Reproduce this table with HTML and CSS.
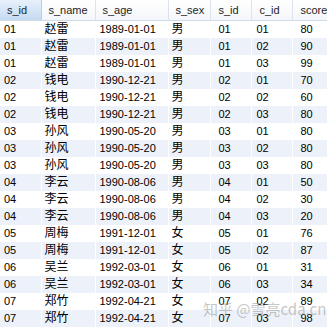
FILE: index.html
```html
<!DOCTYPE html>
<html>
<head>
<meta charset="utf-8">
<link rel="stylesheet" href="styles.css">
</head>
<body>
<div class="grid">
<table class="tbl">
<colgroup>
<col class="c1"><col class="c2"><col class="c3"><col class="c4"><col class="c5"><col class="c6"><col class="c7">
</colgroup>
<thead>
<tr><th class="sel">s_id</th><th>s_name</th><th>s_age</th><th>s_sex</th><th class="p2">s_id</th><th class="p2">c_id</th><th class="p2">score</th></tr>
</thead>
<tbody>
<tr><td>01</td><td class="cn">赵雷</td><td>1989-01-01</td><td class="cn">男</td><td class="p2">01</td><td class="p3">01</td><td class="p2">80</td></tr>
<tr><td>01</td><td class="cn">赵雷</td><td>1989-01-01</td><td class="cn">男</td><td class="p2">01</td><td class="p3">02</td><td class="p2">90</td></tr>
<tr><td>01</td><td class="cn">赵雷</td><td>1989-01-01</td><td class="cn">男</td><td class="p2">01</td><td class="p3">03</td><td class="p2">99</td></tr>
<tr><td>02</td><td class="cn">钱电</td><td>1990-12-21</td><td class="cn">男</td><td class="p2">02</td><td class="p3">01</td><td class="p2">70</td></tr>
<tr><td>02</td><td class="cn">钱电</td><td>1990-12-21</td><td class="cn">男</td><td class="p2">02</td><td class="p3">02</td><td class="p2">60</td></tr>
<tr><td>02</td><td class="cn">钱电</td><td>1990-12-21</td><td class="cn">男</td><td class="p2">02</td><td class="p3">03</td><td class="p2">80</td></tr>
<tr><td>03</td><td class="cn">孙风</td><td>1990-05-20</td><td class="cn">男</td><td class="p2">03</td><td class="p3">01</td><td class="p2">80</td></tr>
<tr><td>03</td><td class="cn">孙风</td><td>1990-05-20</td><td class="cn">男</td><td class="p2">03</td><td class="p3">02</td><td class="p2">80</td></tr>
<tr><td>03</td><td class="cn">孙风</td><td>1990-05-20</td><td class="cn">男</td><td class="p2">03</td><td class="p3">03</td><td class="p2">80</td></tr>
<tr><td>04</td><td class="cn">李云</td><td>1990-08-06</td><td class="cn">男</td><td class="p2">04</td><td class="p3">01</td><td class="p2">50</td></tr>
<tr><td>04</td><td class="cn">李云</td><td>1990-08-06</td><td class="cn">男</td><td class="p2">04</td><td class="p3">02</td><td class="p2">30</td></tr>
<tr><td>04</td><td class="cn">李云</td><td>1990-08-06</td><td class="cn">男</td><td class="p2">04</td><td class="p3">03</td><td class="p2">20</td></tr>
<tr><td>05</td><td class="cn">周梅</td><td>1991-12-01</td><td class="cn">女</td><td class="p2">05</td><td class="p3">01</td><td class="p2">76</td></tr>
<tr><td>05</td><td class="cn">周梅</td><td>1991-12-01</td><td class="cn">女</td><td class="p2">05</td><td class="p3">02</td><td class="p2">87</td></tr>
<tr><td>06</td><td class="cn">吴兰</td><td>1992-03-01</td><td class="cn">女</td><td class="p2">06</td><td class="p3">01</td><td class="p2">31</td></tr>
<tr><td>06</td><td class="cn">吴兰</td><td>1992-03-01</td><td class="cn">女</td><td class="p2">06</td><td class="p3">03</td><td class="p2">34</td></tr>
<tr><td>07</td><td class="cn">郑竹</td><td>1992-04-21</td><td class="cn">女</td><td class="p2">07</td><td class="p3">02</td><td class="p2">89</td></tr>
<tr><td>07</td><td class="cn">郑竹</td><td>1992-04-21</td><td class="cn">女</td><td class="p2">07</td><td class="p3">03</td><td class="p2">98</td></tr>
</tbody>
</table>
<div class="watermark">知乎 @雪亮cda.cn</div>
</div>
</body>
</html>
```
FILE: styles.css
```css
html, body {
  margin: 0;
  padding: 0;
  background: #ffffff;
  overflow: hidden;
}
.grid {
  position: relative;
  width: 327px;
  height: 328px;
  overflow: hidden;
}
.tbl {
  border-collapse: collapse;
  table-layout: fixed;
  width: 340px;
  font-family: "Liberation Sans", "Noto Sans CJK SC", sans-serif;
  font-size: 11px;
  color: #000;
}
.c1 { width: 41px; }
.c2 { width: 54px; }
.c3 { width: 73px; }
.c4 { width: 42px; }
.c5 { width: 41px; }
.c6 { width: 41px; }
.c7 { width: 48px; }
th {
  height: 20px;
  padding: 0 0 0 7px;
  text-align: left;
  font-weight: normal;
  color: #1e1e1e;
  background: linear-gradient(#ffffff, #f3f6fa);
  border-right: 1px solid #dde3ec;
  border-bottom: 1px solid #d2dbe6;
  white-space: nowrap;
  overflow: hidden;
}
th.sel {
  background: linear-gradient(#e8f1fb, #c4daf2);
  border-right-color: #b9cde4;
}
th.p2 { padding-left: 8px; }
td {
  height: 17px;
  padding: 0 0 0 4px;
  border-right: 1px solid #ffffff;
  white-space: nowrap;
  overflow: hidden;
  line-height: 17px;
}
td.cn { font-size: 12px; padding-left: 3px; }
td.p2 { padding-left: 8px; }
td.p3 { padding-left: 5px; }
tbody tr:nth-child(even) td { background: #edf2fa; }
.watermark {
  position: absolute;
  left: 203px;
  top: 298px;
  font-family: "Noto Sans CJK SC", sans-serif;
  font-size: 15px;
  color: rgba(150, 150, 150, 0.55);
  white-space: nowrap;
  letter-spacing: 0px;
}
```
